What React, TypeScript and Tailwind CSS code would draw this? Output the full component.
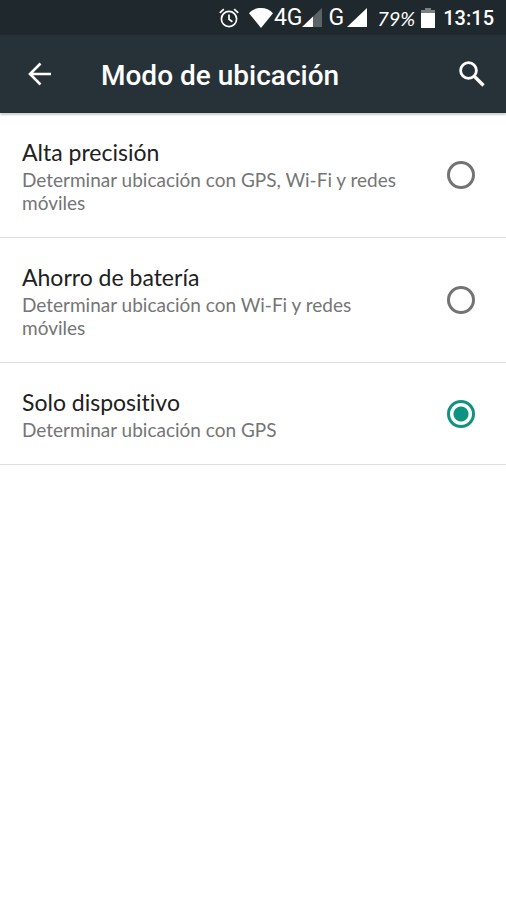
import { useState } from "react";

type Mode = {
  id: string;
  title: string;
  description: string;
};

const modes: Mode[] = [
  {
    id: "high",
    title: "Alta precisión",
    description: "Determinar ubicación con GPS, Wi-Fi y redes móviles",
  },
  {
    id: "battery",
    title: "Ahorro de batería",
    description: "Determinar ubicación con Wi-Fi y redes móviles",
  },
  {
    id: "device",
    title: "Solo dispositivo",
    description: "Determinar ubicación con GPS",
  },
];

const StatusBar = () => {
  return (
    <div className="flex h-[35px] items-center justify-end bg-[#1f282c] pr-3 text-white">
      <svg
        className="mr-2 h-[22px] w-[22px]"
        viewBox="0 0 22 22"
        fill="none"
        stroke="currentColor"
        strokeWidth="1.7"
      >
        <circle cx="11" cy="12" r="7.6" />
        <path d="M11 7.5v4.8l3.4 2.4M1.8 5.8l4-3.6M20.2 5.8l-4-3.6" />
      </svg>
      <svg className="h-5 w-[26px]" viewBox="0 0 26 20" fill="currentColor">
        <path d="M13 20L1 5.2C4 1.8 8.3 0 13 0s9 1.800 12 5.200z" />
      </svg>
      <span className="font-['Roboto'] text-[23px] leading-none">4G</span>
      <svg className="h-5 w-5" viewBox="0 0 20 20">
        <path d="M11 0h9v19h-9z" fill="#5d6467" />
        <path d="M0 0h20L0 19z" fill="#1f282c" />
        <path d="M0 19L11 8.500V19z" fill="#fff" />
      </svg>
      <span className="ml-[6px] font-['Roboto'] text-[23px] leading-none">
        G
      </span>
      <svg className="ml-[3px] h-5 w-5" viewBox="0 0 20 20" fill="currentColor">
        <path d="M0 19L20 0v19z" />
      </svg>
      <span className="ml-[10px] font-['Lato'] text-[20px] leading-none italic">
        79%
      </span>
      <svg className="ml-[6px] h-5 w-[14px]" viewBox="0 0 14 20">
        <path d="M4 0h6v2h4v4H0V2h4z" fill="#7b8183" />
        <path d="M0 5h14v15H0z" fill="#fff" />
      </svg>
      <span className="ml-2 font-['Roboto'] text-[20px] leading-none font-medium">
        13:15
      </span>
    </div>
  );
};

const AppBar = () => {
  return (
    <header className="relative flex h-[78px] items-center bg-[#263238] pr-[21px] pl-7 text-white shadow-[0_2px_2px_rgba(0,0,0,0.2)]">
      <button type="button" aria-label="Atrás">
        <svg
          className="h-6 w-6"
          viewBox="0 0 24 24"
          fill="none"
          stroke="currentColor"
          strokeWidth="2.6"
        >
          <path d="M23 12H2M12.500 1.500L2 12l10.500 10.500" />
        </svg>
      </button>
      <h1 className="ml-[49px] flex-1 pt-[3px] font-['Roboto'] text-[28px] leading-8 font-medium">
        Modo de ubicación
      </h1>
      <button type="button" aria-label="Buscar">
        <svg
          className="h-[26px] w-[26px]"
          viewBox="0 0 26 26"
          fill="none"
          stroke="currentColor"
        >
          <circle cx="9.500" cy="9.500" r="7.900" strokeWidth="2.800" />
          <path d="M15 15l9.500 9.500" strokeWidth="3.400" />
        </svg>
      </button>
    </header>
  );
};

const ModeRow = ({
  mode,
  checked,
  onSelect,
}: {
  mode: Mode;
  checked: boolean;
  onSelect: () => void;
}) => {
  return (
    <label className="flex items-center justify-between border-b border-[#dedede] py-[23px] pr-[31px] pl-[22px] font-['Lato',sans-serif] [font-variant-ligatures:none]">
      <span className="w-[390px]">
        <span className="block text-[23px] leading-8 text-[#212121]">
          {mode.title}
        </span>
        <span className="block text-[19px] leading-[23px] text-[#757575]">
          {mode.description}
        </span>
      </span>
      <input
        type="radio"
        name="mode"
        checked={checked}
        onChange={onSelect}
        className="h-7 w-7 shrink-0 appearance-none rounded-full border-[3px] border-[#737373] checked:border-[#109281] checked:bg-[radial-gradient(circle,#109281_7px,transparent_8px)]"
      />
    </label>
  );
};

export default function App() {
  const [selected, setSelected] = useState("device");

  return (
    <div className="min-h-screen bg-white">
      <StatusBar />
      <AppBar />
      <main>
        {modes.map((mode) => (
          <ModeRow
            key={mode.id}
            mode={mode}
            checked={mode.id === selected}
            onSelect={() => setSelected(mode.id)}
          />
        ))}
      </main>
    </div>
  );
}
